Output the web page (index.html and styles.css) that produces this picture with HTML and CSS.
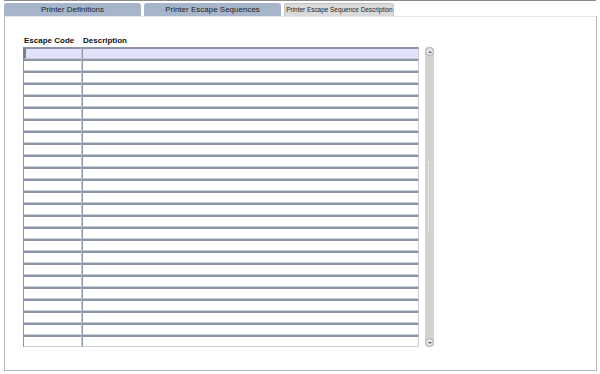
FILE: index.html
```html
<!DOCTYPE html>
<html>
<head>
<meta charset="utf-8">
<link rel="stylesheet" href="styles.css">
</head>
<body>
<div class="topline"></div>
<div class="tabs">
  <div class="tab t1">Printer Definitions</div>
  <div class="tab t2">Printer Escape Sequences</div>
  <div class="tab active"><span class="squeeze">Printer Escape Sequence Description</span></div>
</div>
<div class="panel">
  <div class="grid">
    <div class="table">
      <div class="head"><span class="hc">Escape Code</span><span class="hd">Description</span></div>
      <div class="rows" id="rows"></div>
    </div>
    <div class="scroll">
      <div class="sbtn up"></div>
      <div class="grip"></div>
      <div class="sbtn down"></div>
    </div>
  </div>
</div>
<script>
var r=document.getElementById('rows');
for(var i=0;i<25;i++){var d=document.createElement('div');d.className='row'+(i==0?' first':'');d.innerHTML='<div class="f code"></div><div class="f desc"></div>';r.appendChild(d);}
</script>
</body>
</html>
```
FILE: styles.css
```css
html,body{margin:0;padding:0;background:#fff;}
body{width:600px;height:374px;font-family:"Liberation Sans",Arial,sans-serif;font-size:8px;color:#222;position:relative;overflow:hidden;}
.topline{height:1px;background:#8a8a8a;margin:0 4px;}
.tabs{display:flex;gap:3px;padding:2px 0 0 4px;height:13px;}
.tab{height:13px;line-height:13px;text-align:center;font-size:8px;color:#222;border-radius:3px 3px 0 0;background:#a7b5ca;white-space:nowrap;}
.t1{width:137px;}
.t2{width:137px;}
.tab.active{width:108px;background:#dadada;border:1px solid #c4c4c4;border-bottom:none;height:12px;line-height:12px;display:flex;justify-content:center;overflow:visible;}
.squeeze{display:inline-block;transform:scaleX(0.8);transform-origin:center;}
.panel{margin:0 3px 0 4px;height:355px;border:1px solid #b8b8b8;border-top:1px solid #e6e6e6;box-sizing:border-box;padding:19px 0 0 18px;}
.grid{display:flex;gap:6px;}
.head{height:11px;font-weight:bold;font-size:8px;line-height:10px;color:#111;white-space:nowrap;}
.hc{display:inline-block;width:59px;padding-left:1px;}
.hd{display:inline-block;}
.row{display:flex;height:12px;}
.f{box-sizing:border-box;height:12px;border-top:2px solid #8c95a6;border-left:1px solid #8c95a6;border-right:1px solid #c8ccd6;border-bottom:1px solid #c8ccd6;background:#fff;}
.code{width:59px;}
.desc{width:337px;}
.first .f{background:#e2e2fb;}
.first .code{border-left:3px solid #7a7f90;}
.scroll{margin-top:11px;width:9px;height:300px;background:#d2d2d2;border-radius:4px;display:flex;flex-direction:column;justify-content:space-between;align-items:center;}
.sbtn{width:9px;height:9px;border-radius:50%;background:#e4e4e4;border:1px solid #b0b0b0;box-sizing:border-box;position:relative;}
.up::after,.down::after{content:"";position:absolute;left:2px;width:0;height:0;border-left:2px solid transparent;border-right:2px solid transparent;}
.up::after{top:3px;border-bottom:2px solid #666;}
.down::after{top:3px;border-top:2px solid #666;}
.grip{width:2px;height:70px;border-left:1px dotted #f4f4f4;}
```
